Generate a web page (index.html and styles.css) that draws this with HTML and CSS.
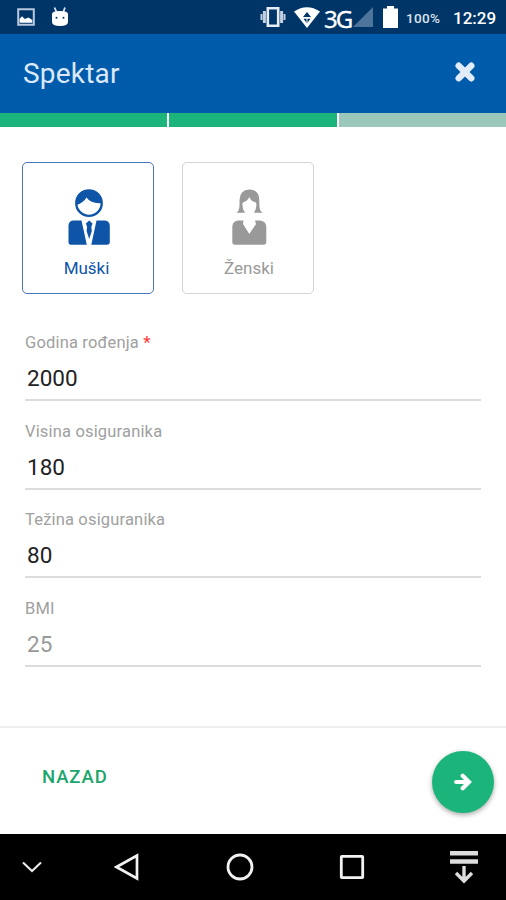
FILE: index.html
```html
<!DOCTYPE html>
<html lang="hr">
<head>
<meta charset="utf-8">
<title>Spektar</title>
<link rel="stylesheet" href="styles.css">
</head>
<body>
<div class="screen">
  <div class="status">
    <div class="notices">
      <svg width="18" height="18" viewBox="0 0 18 18"><path d="M1.2 1.2H16.8V16.8H1.2Z" fill="none" stroke="#b9c8df" stroke-width="2"/><path d="M2.5 14.8V11L5 8.3L7.8 11L11.5 9.5L15.3 12V14.8Z" fill="#fff"/></svg>
      <svg width="18" height="20" viewBox="0 0 18 20"><path d="M3.5 0.5L5.5 5M14 0.5L12.3 5" stroke="#dfe7f5" stroke-width="1.8"/><path d="M1 7Q1 4 9 4Q17 4 17 7V15Q17 19 9 19Q1 19 1 15Z" fill="#fff"/><circle cx="5.5" cy="10.8" r="1" fill="#003363"/><circle cx="12.5" cy="10.8" r="1" fill="#003363"/></svg>
    </div>
    <div class="signals">
      <svg class="vibrate" width="26" height="20" viewBox="0 0 26 20"><path d="M7.8 1.3H18.2V18.7H7.8Z" fill="none" stroke="#e6edf6" stroke-width="2.6"/><path d="M4.4 4V16M21.6 4V16" stroke="#c3d0e2" stroke-width="3"/><path d="M1.5 7V13M24.5 7V13" stroke="#c3d0e2" stroke-width="2"/></svg>
      <svg class="wifi" width="26" height="21" viewBox="0 0 26 21"><path d="M0 4.5Q13-4 26 4.5L13 21Z" fill="#fff"/><path d="M9 10L13 5L17 10ZM9.5 11.8H16.5L13 16.5Z" fill="#003363"/><path d="M13 11V18" stroke="#fff"/></svg>
      <span class="network">3G</span>
      <svg class="cell" width="20" height="20" viewBox="0 0 20 20"><path d="M0 20L20 0V20Z" fill="#4d759b"/></svg>
      <svg class="battery" width="15" height="22" viewBox="0 0 15 22"><path d="M4 0H11V2.5H15V22H0V2.5H4Z" fill="#fff"/></svg>
      <span class="percent">100%</span>
      <span class="clock">12:29</span>
    </div>
  </div>
  <header class="header">
    <h1>Spektar</h1>
    <svg width="20" height="20" viewBox="0 0 20 20"><path d="M3.7 3.7L16.3 16.3M16.3 3.7L3.7 16.3" stroke="#e2ebf8" stroke-width="6.4" stroke-linecap="round"/></svg>
  </header>
  <div class="progress"><i class="done"></i><i class="done"></i><i></i></div>
  <main class="form">
    <div class="cards">
      <div class="card selected">
        <svg width="44" height="60" viewBox="67 187 44 60"><circle cx="89" cy="203.2" r="12.7" fill="#fff" stroke="currentColor" stroke-width="2.4"/><path d="M76 205C75 194 81 190 89 190S102 195 102 203Q91 204 86.5 197.5Q83 203.5 76 205Z" fill="currentColor"/><path d="M73 220.5H81.5L86.8 244.8H71Q68.5 244.8 68.5 242V226Q68.5 221 73 220.5ZM96.5 220.5H105Q109.8 221 109.8 226V242Q109.8 244.8 107 244.8H91.3ZM85.9 223.5L89.2 220.5L92.5 223.5L91.3 227L91.8 231L89.2 239L86.6 231L87.1 227Z" fill="currentColor"/></svg>
        <span>Muški</span>
      </div>
      <div class="card">
        <svg width="44" height="60" viewBox="227 187 44 60"><path d="M236 212.8C240 211 239.5 206 239.5 200Q240 189.5 249.3 189.5Q259 189.5 259.3 200C259.3 206 259 211 263 212.8H254Q257.5 207 256 202.5Q251 201.5 249.4 197Q247 201.5 242.7 202.5Q241.5 207 245 212.8Z" fill="currentColor"/><path d="M238 220.4H243.5L243 224L249.3 234L256 224L255 220.4H260Q266.3 221 266.3 227V242Q266.3 244.8 263.5 244.8H235Q232.3 244.8 232.3 242V227Q232.3 221 238 220.4Z" fill="currentColor"/></svg>
        <span class="female">Ženski</span>
      </div>
    </div>
    <div class="field"><label>Godina rođenja <b>*</b></label><div class="value">2000</div></div>
    <div class="field"><label>Visina osiguranika</label><div class="value">180</div></div>
    <div class="field"><label>Težina osiguranika</label><div class="value">80</div></div>
    <div class="field"><label>BMI</label><div class="value muted">25</div></div>
  </main>
  <footer class="actions">
    <span class="back">NAZAD</span>
    <div class="next"><svg width="18" height="18" viewBox="0 0 18 18"><path d="M2.2 9H14M8.7 2.7L15 9L8.7 15.3" fill="none" stroke="#fff" stroke-width="4.2" stroke-linecap="round"/></svg></div>
  </footer>
  <nav class="navbar">
    <svg width="20" height="12" viewBox="0 0 20 12"><path d="M1 1.5L10 10L19 1.5" fill="none" stroke="#eee" stroke-width="2"/></svg>
    <svg width="26" height="28" viewBox="0 0 26 28"><path d="M2.5 14L23 2.5V25.5Z" fill="none" stroke="#f2f2f2" stroke-width="2.7"/></svg>
    <svg width="28" height="28" viewBox="0 0 28 28"><circle cx="14" cy="14" r="12" fill="none" stroke="#f2f2f2" stroke-width="2.8"/></svg>
    <svg width="26" height="26" viewBox="0 0 26 26"><rect x="2.3" y="2.3" width="21.4" height="21.4" rx=".6" fill="none" stroke="#f2f2f2" stroke-width="2.8"/></svg>
    <svg width="28" height="34" viewBox="0 0 28 34"><path d="M0 3.2H28M0 11.5H28" stroke="#ddd" stroke-width="4.4"/><path d="M14 16V31M6 23L14 31L22 23" fill="none" stroke="#ddd" stroke-width="3.4"/></svg>
  </nav>
</div>
</body>
</html>
```

FILE: styles.css
```css
* { box-sizing: border-box; }
body { margin: 0; font-family: Roboto, sans-serif; background: #fff; }
svg { display: block; flex: none; }
.screen { width: 506px; height: 900px; display: flex; flex-direction: column; overflow: hidden; }
.status { height: 34px; flex: none; background: #003567; color: #fff; display: flex; justify-content: space-between; padding: 0 10px 0 17px; }
.notices, .signals { display: flex; align-items: center; }
.notices { gap: 16px; }
.signals { white-space: nowrap; }
.wifi { margin-left: 8px; }
.network { width: 28px; margin: 3px 0 0 4px; font: 24px/26px "Noto Sans", sans-serif; letter-spacing: -1.9px; -webkit-text-stroke: .3px #fff; }
.cell { margin-left: 1px; }
.battery { margin-left: 10px; }
.percent { width: 35px; margin-left: 8px; font-size: 13.5px; font-weight: 500; letter-spacing: .3px; color: #dce4ee; padding-top: 2px; }
.clock { width: 43px; margin-left: 12px; font-size: 17px; font-weight: 500; padding-top: 1px; }
.header { height: 79px; flex: none; background: #005bab; display: flex; justify-content: space-between; align-items: center; padding: 0 31px 0 23px; }
.header svg { margin-top: -4px; }
.header h1 { margin: 0; font-size: 28px; font-weight: 400; letter-spacing: .2px; color: #dce9fa; line-height: 79px; }
.progress { height: 14px; flex: none; display: flex; gap: 2px; padding-bottom: .5px; }
.progress i { flex: 1; background: #9bc8bb; }
.progress .done { background: #1bb47a; }
.form { flex: 1; padding: 35px 25px 0; }
.cards { display: flex; gap: 28px; margin: 0 0 38px -3px; }
.card { width: 132px; height: 132px; border: 1px solid #d5d5d5; border-radius: 5px; display: flex; flex-direction: column; align-items: center; padding: 24px 0 0 2px; color: #999; font-size: 17px; }
.card span { line-height: 20px; margin: 11px 0 0 -5px; letter-spacing: 0; }
.card .female { margin-left: 0; }
.card.selected { border-color: #4a77b7; color: #0e55a8; }
.field { height: 88.6px; }
.field label { display: block; height: 22px; line-height: 22px; font-size: 16.5px; letter-spacing: .17px; color: #a0a0a0; }
.field b { color: #ff3b3b; font-weight: 500; }
.value { height: 47px; padding: 2px 0 0 2px; border-bottom: 2px solid #dcdcdc; font-size: 22.5px; line-height: 44px; color: #222; }
.muted { color: #999; }
.actions { height: 107.5px; flex: none; border-top: 2px solid #eee; display: flex; justify-content: space-between; padding: 23px 12px 0 42px; }
.back { color: #1ba66b; font-size: 18.5px; font-weight: 500; letter-spacing: .9px; line-height: 52px; }
.next { width: 62px; height: 62px; border-radius: 50%; background: #1bb47a; box-shadow: 0 2px 5px rgba(0,0,0,.35); display: flex; align-items: center; justify-content: center; }
.navbar { height: 66.5px; flex: none; background: #000; display: grid; grid-template-columns: 64px 126px 99px 126px 98px; align-items: center; justify-items: center; }
```
